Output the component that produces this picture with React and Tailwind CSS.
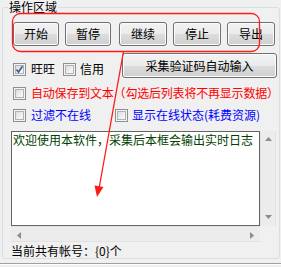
import React from "react";

function CheckBox({ checked }) {
  return (
    <div className="w-[13px] h-[13px] shrink-0 border border-[#8e8f8f] bg-[#f4f4f4] p-[1px] box-border">
      <div className="w-full h-full border border-[#aeb3b9] bg-[linear-gradient(135deg,#dcdcdc_0%,#f0f0f0_60%,#fafafa_100%)] relative">
        {checked && (
          <svg className="absolute left-[-1px] top-[-1px]" width="9" height="9" viewBox="0 0 9 9">
            <path d="M1.5 4.5 L3.5 7 L7.5 1.2" fill="none" stroke="#4a5f97" strokeWidth="1.8" />
          </svg>
        )}
      </div>
    </div>
  );
}

function Btn({ children, className = "" }) {
  return (
    <div
      className={
        "flex items-center justify-center rounded-[3px] border border-[#707070] shadow-[inset_0_0_0_1px_#fcfcfc] bg-[linear-gradient(to_bottom,#f2f2f2_0%,#ebebeb_50%,#dddddd_50%,#cfcfcf_100%)] text-black " +
        className
      }
    >
      {children}
    </div>
  );
}

export default function App() {
  return (
    <div className="relative w-[281px] h-[267px] overflow-hidden bg-[#f0f0f0] text-[12px] leading-[14px] text-black font-['Noto_Sans_CJK_SC','Liberation_Sans',sans-serif]">
      <fieldset className="ml-[2px] w-[277px] h-[259px] border border-[#d5dfe5] rounded-[3px] p-0 m-0">
        <legend className="ml-[5px] px-[1px] leading-[14px]">操作区域</legend>
        <div className="pl-[10px]">
          <div className="mt-[8px] flex h-[24px]">
            <Btn className="w-[46px] h-[24px]">开始</Btn>
            <Btn className="ml-[6px] w-[46px] h-[24px]">暂停</Btn>
            <Btn className="ml-[8px] w-[48px] h-[24px]">继续</Btn>
            <Btn className="ml-[6px] w-[48px] h-[24px]">停止</Btn>
            <Btn className="ml-[6px] w-[48px] h-[24px]">导出</Btn>
          </div>

          <div className="mt-[7px] flex h-[25px]">
            <div className="mt-[10px] flex items-start">
              <CheckBox checked />
              <span className="ml-[5px] mt-[-1px]">旺旺</span>
              <div className="ml-[8px]">
                <CheckBox />
              </div>
              <span className="ml-[4px] mt-[-1px]">信用</span>
            </div>
            <Btn className="ml-[18px] w-[155px] h-[25px]">采集验证码自动输入</Btn>
          </div>

          <div className="mt-[8px] flex items-center h-[14px]">
            <CheckBox />
            <span className="ml-[5px] text-[#ff0000] whitespace-nowrap tracking-[-0.2px]">自动保存到文本（勾选后列表将不再显示数据）</span>
          </div>

          <div className="mt-[8px] flex items-center h-[14px]">
            <CheckBox />
            <span className="ml-[5px] text-[#0000ff] whitespace-nowrap">过滤不在线</span>
            <div className="ml-[24px]">
              <CheckBox />
            </div>
            <span className="ml-[4px] text-[#0000ff] whitespace-nowrap">显示在线状态(耗费资源)</span>
          </div>

          <div className="mt-[9px] ml-[-2px] grid grid-cols-[249px_16px] grid-rows-[95px_16px] w-[265px]">
            <div className="bg-white border border-[#646464] px-[1px] pt-[1px] text-[#004000] whitespace-nowrap overflow-hidden">
              欢迎使用本软件，采集后本框会输出实时日志
            </div>
            <div className="relative bg-[#ececec] border-x border-[#e2e2e2]">
              <svg className="absolute left-[4px] top-[6px]" width="7" height="4" viewBox="0 0 7 4">
                <path d="M3.5 0 L7 4 L0 4 Z" fill="#8c8c8c" />
              </svg>
              <svg className="absolute left-[4px] bottom-[7px]" width="7" height="4" viewBox="0 0 7 4">
                <path d="M0 0 L7 0 L3.5 4 Z" fill="#8c8c8c" />
              </svg>
            </div>
            <div className="relative bg-[#ececec] border-y border-[#e2e2e2]">
              <svg className="absolute left-[6px] top-[5px]" width="4" height="7" viewBox="0 0 4 7">
                <path d="M4 0 L4 7 L0 3.5 Z" fill="#8c8c8c" />
              </svg>
              <svg className="absolute right-[6px] top-[5px]" width="4" height="7" viewBox="0 0 4 7">
                <path d="M0 0 L4 3.5 L0 7 Z" fill="#8c8c8c" />
              </svg>
            </div>
            <div className="bg-[#f0f0f0]"></div>
          </div>

          <div className="mt-[2px] ml-[-2px] whitespace-nowrap">当前共有帐号：{"{0}"}个</div>
        </div>
      </fieldset>
      <div className="mt-[4px] h-[1px] bg-[#a0a0a0]"></div>
      <div className="h-[1px] bg-white"></div>

      <svg className="absolute left-0 top-0 pointer-events-none" width="281" height="267" viewBox="0 0 281 267">
        <rect x="12.5" y="13.5" width="247" height="38" rx="8" ry="8" fill="none" stroke="#ff1a1a" strokeWidth="1.3" />
        <line x1="123.5" y1="51.5" x2="99.3" y2="187" stroke="#ff1a1a" strokeWidth="1.3" />
        <polygon points="97,197 94.5,185.5 103.5,187" fill="#ff1a1a" />
      </svg>
    </div>
  );
}
